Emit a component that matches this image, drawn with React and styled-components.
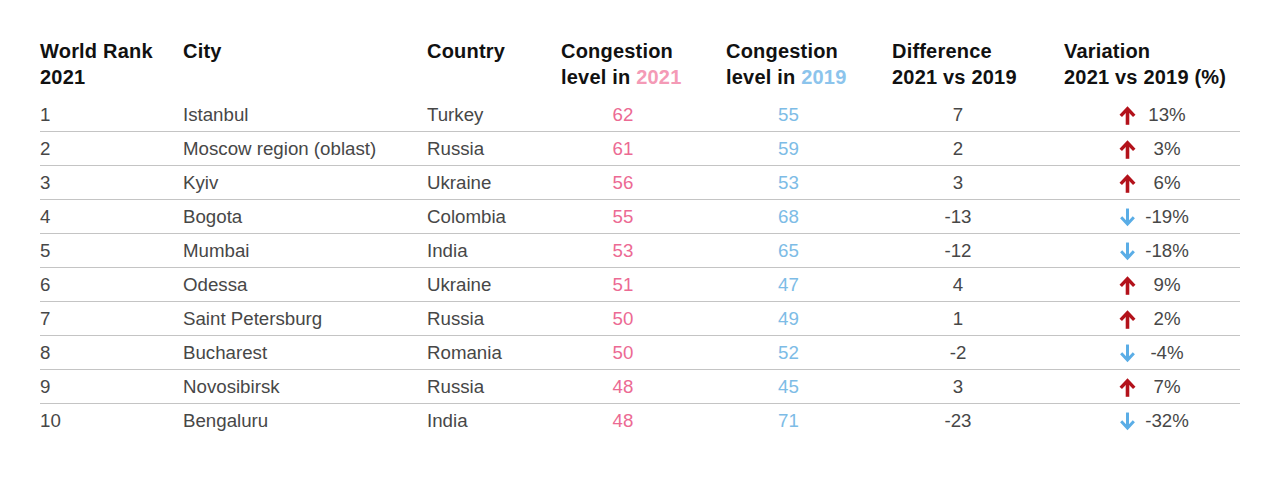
import React from 'react';
import styled, { createGlobalStyle } from 'styled-components';

const rows = [
  { rank: 1, city: 'Istanbul', country: 'Turkey', y21: 62, y19: 55, diff: '7', pct: '13%', up: true },
  { rank: 2, city: 'Moscow region (oblast)', country: 'Russia', y21: 61, y19: 59, diff: '2', pct: '3%', up: true },
  { rank: 3, city: 'Kyiv', country: 'Ukraine', y21: 56, y19: 53, diff: '3', pct: '6%', up: true },
  { rank: 4, city: 'Bogota', country: 'Colombia', y21: 55, y19: 68, diff: '-13', pct: '-19%', up: false },
  { rank: 5, city: 'Mumbai', country: 'India', y21: 53, y19: 65, diff: '-12', pct: '-18%', up: false },
  { rank: 6, city: 'Odessa', country: 'Ukraine', y21: 51, y19: 47, diff: '4', pct: '9%', up: true },
  { rank: 7, city: 'Saint Petersburg', country: 'Russia', y21: 50, y19: 49, diff: '1', pct: '2%', up: true },
  { rank: 8, city: 'Bucharest', country: 'Romania', y21: 50, y19: 52, diff: '-2', pct: '-4%', up: false },
  { rank: 9, city: 'Novosibirsk', country: 'Russia', y21: 48, y19: 45, diff: '3', pct: '7%', up: true },
  { rank: 10, city: 'Bengaluru', country: 'India', y21: 48, y19: 71, diff: '-23', pct: '-32%', up: false },
];

const GlobalStyle = createGlobalStyle`
  body {
    margin: 0;
    background: #ffffff;
    font-family: "Liberation Sans", Arial, sans-serif;
  }
`;

const Page = styled.div`
  padding: 38px 40px 0;
`;

const Table = styled.table`
  width: 1200px;
  border-collapse: collapse;
  table-layout: fixed;
`;

const Th = styled.th`
  box-sizing: border-box;
  width: ${p => p.$w}px;
  padding: 0 ${p => p.$pr || 0}px 8px 0;
  text-align: left;
  vertical-align: top;
  font-size: 20px;
  line-height: 26px;
  font-weight: 700;
  letter-spacing: 0.2px;
  color: #111111;
  white-space: nowrap;
`;

const Year = styled.span`
  color: ${p => p.$tone};
`;

const Row = styled.tr`
  border-bottom: 1px solid #c4c4c4;

  &:last-child {
    border-bottom: none;
  }
`;

const Td = styled.td`
  height: 33px;
  padding: 0 ${p => p.$pr || 0}px 0 ${p => p.$pl || 0}px;
  text-align: ${p => (p.$center ? 'center' : 'left')};
  vertical-align: middle;
  font-size: 18.7px;
  line-height: 22px;
  color: ${p => p.$color || '#474747'};
  white-space: nowrap;
`;

const Variation = styled.span`
  display: inline-flex;
  align-items: center;
  gap: 7px;
  vertical-align: middle;

  svg {
    display: block;
    margin-top: 1px;
  }
`;

const Pct = styled.span`
  min-width: 48px;
  text-align: center;
`;

const Arrow = ({ up }) =>
  up ? (
    <svg width="17" height="19" viewBox="0 0 16 18">
      <path d="M8 17.8V3.5" stroke="#b3121b" strokeWidth="3.4" fill="none" />
      <path d="M1.6 9.4L8 2.6l6.4 6.8" stroke="#b3121b" strokeWidth="3.2" fill="none" />
    </svg>
  ) : (
    <svg width="17" height="19" viewBox="0 0 16 18">
      <path d="M8 0.5V14.5" stroke="#5aade6" strokeWidth="2.8" fill="none" />
      <path d="M2 8.8L8 15.2 14 8.8" stroke="#5aade6" strokeWidth="2.8" fill="none" />
    </svg>
  );

export default function App() {
  return (
    <>
      <GlobalStyle />
      <Page>
        <Table>
          <thead>
            <tr>
              <Th $w={143}>World Rank<br />2021</Th>
              <Th $w={244}>City</Th>
              <Th $w={134}>Country</Th>
              <Th $w={165} $pr={41}>Congestion<br />level in <Year $tone="#f49ab6">2021</Year></Th>
              <Th $w={166} $pr={41}>Congestion<br />level in <Year $tone="#8cc4ec">2019</Year></Th>
              <Th $w={172} $pr={40}>Difference<br />2021 vs 2019</Th>
              <Th $w={176}>Variation<br />2021 vs 2019 (%)</Th>
            </tr>
          </thead>
          <tbody>
            {rows.map(r => (
              <Row key={r.rank}>
                <Td>{r.rank}</Td>
                <Td>{r.city}</Td>
                <Td>{r.country}</Td>
                <Td $center $pr={41} $color="#ec6a93">{r.y21}</Td>
                <Td $center $pr={41} $color="#7dbce6">{r.y19}</Td>
                <Td $center $pr={40}>{r.diff}</Td>
                <Td $center $pl={6}>
                  <Variation>
                    <Arrow up={r.up} />
                    <Pct>{r.pct}</Pct>
                  </Variation>
                </Td>
              </Row>
            ))}
          </tbody>
        </Table>
      </Page>
    </>
  );
}
